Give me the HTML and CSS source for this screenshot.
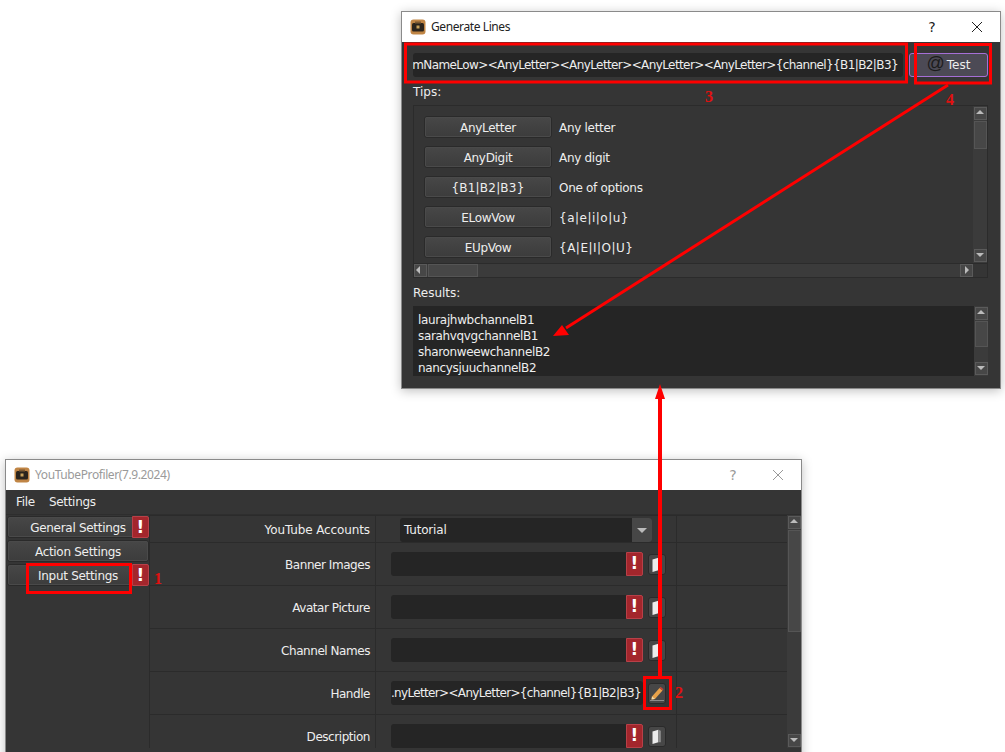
FILE: index.html
```html
<!DOCTYPE html>
<html>
<head>
    <meta charset="utf-8">
    <title>Generate Lines</title>
    <link rel="stylesheet" href="styles.css">
</head>
<body>
    <svg width="0" height="0" class="defs">
        <symbol id="logo" viewBox="0 0 16 16">
            <rect x="0.5" y="0.5" width="15" height="15" rx="3" fill="#c08545"/>
            <rect x="2" y="4" width="12" height="8.500" rx="1.500" fill="#2b241c"/>
            <rect x="5" y="2.500" width="6" height="2" fill="#7d5a32"/>
            <rect x="6.500" y="6.500" width="3" height="3" fill="#c9a15a"/>
        </symbol>
        <symbol id="book" viewBox="0 0 18 20">
            <path d="M3 4l7-2v15l-7 2z" fill="#ececec"/>
            <path d="M10 2l3 1v14l-3 0z" fill="#8c8c8c"/>
        </symbol>
    </svg>

    <div class="window lines-window">
        <div class="titlebar">
            <svg class="logo"><use href="#logo"/></svg>
            <span class="title">Generate Lines</span>
            <span class="help">?</span>
            <svg class="close" viewBox="0 0 12 12"><path d="M1 1l10 10M11 1L1 11" stroke="#222" fill="none"/></svg>
        </div>
        <div class="lines-body">
            <div class="pattern-row">
                <div class="line-edit pattern">mNameLow&gt;&lt;AnyLetter&gt;&lt;AnyLetter&gt;&lt;AnyLetter&gt;&lt;AnyLetter&gt;{channel}{B1|B2|B3}</div>
                <button class="test-btn"><span class="at">@</span> Test</button>
            </div>
            <div class="caption tips-caption">Tips:</div>
            <div class="tips-box">
                <div class="tips-main">
                    <div class="tips-list">
                        <div class="tip"><button class="btn tip-btn">AnyLetter</button><span>Any letter</span></div>
                        <div class="tip"><button class="btn tip-btn">AnyDigit</button><span>Any digit</span></div>
                        <div class="tip"><button class="btn tip-btn opts-btn">{B1|B2|B3}</button><span>One of options</span></div>
                        <div class="tip"><button class="btn tip-btn">ELowVow</button><span class="opts">{a|e|i|o|u}</span></div>
                        <div class="tip"><button class="btn tip-btn">EUpVow</button><span class="opts">{A|E|I|O|U}</span></div>
                    </div>
                    <div class="vscroll">
                        <div class="sb-btn up"></div>
                        <div class="sb-thumb tips-thumb"></div>
                        <div class="sb-track"></div>
                        <div class="sb-btn down"></div>
                    </div>
                </div>
                <div class="hscroll">
                    <div class="sb-btn left"></div>
                    <div class="sb-thumb h-thumb"></div>
                    <div class="sb-track"></div>
                    <div class="sb-btn right"></div>
                    <div class="sb-corner"></div>
                </div>
            </div>
            <div class="caption results-caption">Results:</div>
            <div class="results">
                <div class="results-text">
                    <div>laurajhwbchannelB1</div>
                    <div>sarahvqvgchannelB1</div>
                    <div>sharonweewchannelB2</div>
                    <div>nancysjuuchannelB2</div>
                </div>
                <div class="vscroll">
                    <div class="sb-btn up"></div>
                    <div class="sb-thumb results-thumb"></div>
                    <div class="sb-track"></div>
                    <div class="sb-btn down"></div>
                </div>
            </div>
        </div>
    </div>

    <div class="window profiler-window">
        <div class="titlebar">
            <svg class="logo"><use href="#logo"/></svg>
            <span class="title faded">YouTubeProfiler(7.9.2024)</span>
            <span class="help faded">?</span>
            <svg class="close" viewBox="0 0 12 12"><path d="M1 1l10 10M11 1L1 11" stroke="#999" fill="none"/></svg>
        </div>
        <div class="menubar"><span>File</span><span>Settings</span></div>
        <div class="profiler-body">
            <div class="side">
                <div class="side-item"><button class="btn side-btn">General Settings</button><span class="alert side-alert">!</span></div>
                <div class="side-item"><button class="btn side-btn">Action Settings</button></div>
                <div class="side-item"><button class="btn side-btn">Input Settings</button><span class="alert side-alert">!</span></div>
            </div>
            <div class="form">
                <div class="form-row first">
                    <div class="form-label">YouTube Accounts</div>
                    <div class="form-field">
                        <div class="combo"><span class="combo-text">Tutorial</span><span class="combo-arrow"></span></div>
                    </div>
                    <div class="form-rest"></div>
                </div>
                <div class="form-row">
                    <div class="form-label">Banner Images</div>
                    <div class="form-field">
                        <div class="line-edit field-edit"><span class="alert">!</span></div>
                        <button class="icon-btn"><svg class="book"><use href="#book"/></svg></button>
                    </div>
                    <div class="form-rest"></div>
                </div>
                <div class="form-row">
                    <div class="form-label">Avatar Picture</div>
                    <div class="form-field">
                        <div class="line-edit field-edit"><span class="alert">!</span></div>
                        <button class="icon-btn"><svg class="book"><use href="#book"/></svg></button>
                    </div>
                    <div class="form-rest"></div>
                </div>
                <div class="form-row">
                    <div class="form-label">Channel Names</div>
                    <div class="form-field">
                        <div class="line-edit field-edit"><span class="alert">!</span></div>
                        <button class="icon-btn"><svg class="book"><use href="#book"/></svg></button>
                    </div>
                    <div class="form-rest"></div>
                </div>
                <div class="form-row">
                    <div class="form-label">Handle</div>
                    <div class="form-field">
                        <div class="line-edit field-edit handle">.nyLetter&gt;&lt;AnyLetter&gt;{channel}{B1|B2|B3}</div>
                        <button class="icon-btn">
                            <svg class="pencil" viewBox="0 0 16 16">
                                <path d="M3 11.500L10.500 3l3 2.500L6 14l-3.500 .5z" fill="#e8a24a"/>
                                <path d="M10.500 3l1-1.200 3 2.500-1 1.200z" fill="#c8443a"/>
                                <path d="M2.500 14.500l.5-3 3 2.500z" fill="#f3dcae"/>
                                <path d="M1 15.500h14" stroke="#8a8a8a"/>
                            </svg>
                        </button>
                    </div>
                    <div class="form-rest"></div>
                </div>
                <div class="form-row">
                    <div class="form-label">Description</div>
                    <div class="form-field">
                        <div class="line-edit field-edit"><span class="alert">!</span></div>
                        <button class="icon-btn"><svg class="book"><use href="#book"/></svg></button>
                    </div>
                    <div class="form-rest"></div>
                </div>
            </div>
            <div class="vscroll main-scroll">
                <div class="sb-btn up"></div>
                <div class="sb-thumb main-thumb"></div>
                <div class="sb-track"></div>
                <div class="sb-btn down"></div>
            </div>
        </div>
    </div>

    <!-- red tutorial marks drawn over the screenshot -->
    <svg class="marks" width="1005" height="752" viewBox="0 0 1005 752">
        <g fill="none" stroke="#f00" stroke-width="3">
            <rect x="405.500" y="44" width="501" height="38"/>
            <rect x="915.500" y="44.500" width="75" height="38.500"/>
            <rect x="27.500" y="564.500" width="103" height="28"/>
            <rect x="644.500" y="677.500" width="26" height="31"/>
            <path d="M948 85L566 328"/>
        </g>
        <path d="M660 398V678" fill="none" stroke="#f00" stroke-width="4"/>
        <path d="M553 336L562 325L569 335z" fill="#f00"/>
        <path d="M660 384L655 399H665z" fill="#f00"/>
        <g class="mark-num">
            <text x="154" y="584">1</text>
            <text x="675" y="698">2</text>
            <text x="705" y="102">3</text>
            <text x="946" y="105">4</text>
        </g>
    </svg>
</body>
</html>
```

FILE: styles.css
```css
html, body {
    margin: 0;
    padding: 0;
}

body {
    width: 1005px;
    height: 752px;
    overflow: hidden;
    background: #fff;
    position: relative;
    font-family: "DejaVu Sans", sans-serif;
    font-size: 12px;
    color: #eee;
}

.defs {
    position: absolute;
}

button {
    font: inherit;
    color: inherit;
    padding: 0;
}

.window {
    position: absolute;
    box-sizing: border-box;
    border: 1px solid #8a8a8a;
    background: #353535;
    box-shadow: 0 2px 10px rgba(0, 0, 0, .25);
    display: flex;
    flex-direction: column;
}

.lines-window {
    left: 401px;
    top: 11px;
    width: 600px;
    height: 378px;
}

.profiler-window {
    left: 5px;
    top: 459px;
    width: 797px;
    height: 310px;
}

.titlebar {
    height: 30px;
    flex: none;
    background: #fff;
    color: #222;
    display: flex;
    align-items: center;
}

.logo {
    width: 16px;
    height: 16px;
    margin-left: 8px;
    margin-right: 5px;
}

.title {
    flex: 1;
    font-family: "Noto Sans", sans-serif;
    letter-spacing: -.4px;
    margin-bottom: 1px;
}

.faded {
    color: #9a9a9a;
}

.help {
    width: 14px;
    text-align: center;
    margin-right: 32px;
    font-size: 14px;
}

.close {
    width: 12px;
    height: 12px;
    margin-right: 17px;
}

/* generate lines */
.lines-body {
    flex: 1;
    padding: 11px 12px 0 11px;
    display: flex;
    flex-direction: column;
}

.pattern-row {
    display: flex;
    gap: 6px;
    height: 24px;
}

.line-edit {
    background: #252525;
    border-radius: 3px;
    box-sizing: border-box;
}

.pattern {
    width: 490px;
    overflow: hidden;
    display: flex;
    justify-content: flex-end;
    align-items: center;
    white-space: nowrap;
    padding-right: 5px;
    letter-spacing: -.6px;
}

.test-btn {
    width: 79px;
    background: #4c4a55;
    border: 1px solid #a56fd6;
    border-radius: 3px;
    display: flex;
    align-items: center;
    justify-content: center;
    gap: 2px;
}

.at {
    font-family: "Liberation Sans", sans-serif;
    font-size: 18px;
    color: #1c1c1c;
    margin-bottom: 3px;
}

.caption {
    line-height: 14px;
}

.tips-caption {
    margin-top: 8px;
    height: 20px;
}

.results-caption {
    margin-top: 8px;
    height: 20px;
}

.tips-box {
    height: 173px;
    box-sizing: border-box;
    border: 1px solid #2b2b2b;
    display: flex;
    flex-direction: column;
}

.tips-main {
    flex: 1;
    display: flex;
    min-height: 0;
}

.tips-list {
    flex: 1;
    padding: 10px 0 0 10px;
    display: flex;
    flex-direction: column;
    gap: 8px;
}

.tip {
    display: flex;
    align-items: center;
    gap: 7px;
    height: 22px;
    letter-spacing: -.3px;
}

.tip span {
    padding-top: 2px;
}

.tip .opts {
    letter-spacing: .5px;
}

.btn {
    background: linear-gradient(#474747, #3c3c3c);
    border: 1px solid #2a2a2a;
    border-radius: 3px;
    outline: 1px solid #4a4a4a;
    outline-offset: -2px;
    letter-spacing: -.3px;
    padding-top: 2px;
}

.tip-btn {
    width: 128px;
    height: 22px;
}

.opts-btn {
    letter-spacing: .2px;
}

.results {
    height: 70px;
    background: #252525;
    display: flex;
}

.results-text {
    flex: 1;
    padding: 6px 5px 0;
    line-height: 16px;
    letter-spacing: -.34px;
}

/* scrollbars */
.vscroll {
    width: 14px;
    flex: none;
    box-sizing: border-box;
    padding: 1px 0;
    background: #3b3b3b;
    display: flex;
    flex-direction: column;
    align-items: center;
}

.hscroll {
    height: 14px;
    flex: none;
    box-sizing: border-box;
    background: #3b3b3b;
    border-top: 1px solid #2b2b2b;
    display: flex;
}

.sb-track {
    flex: 1;
}

.sb-btn {
    width: 13px;
    height: 13px;
    flex: none;
    background: #474747;
    border: 1px solid #5a5a5a;
    box-sizing: border-box;
    position: relative;
}

.sb-btn::after {
    content: "";
    position: absolute;
    left: 1px;
    top: 2px;
    border: 4.500px solid transparent;
}

.up::after {
    left: 1px;
    top: -2px;
    border-bottom-color: #bbb;
}

.down::after {
    left: 1px;
    top: 3px;
    border-top-color: #bbb;
}

.left::after {
    left: -3px;
    top: 1px;
    border-right-color: #bbb;
}

.right::after {
    left: 4px;
    top: 1px;
    border-left-color: #bbb;
}

.sb-thumb {
    background: #474747;
    border: 1px solid #555;
    box-sizing: border-box;
}

.tips-thumb {
    width: 13px;
    height: 28px;
    margin-top: 1px;
}

.results-thumb {
    width: 13px;
    height: 26px;
    margin-top: 1px;
}

.main-thumb {
    width: 13px;
    height: 102px;
    margin-top: 1px;
}

.h-thumb {
    width: 50px;
    height: 13px;
    margin-left: 1px;
}

.sb-corner {
    width: 14px;
    background: #353535;
}

/* profiler */
.menubar {
    height: 25px;
    flex: none;
    background: #353535;
    display: flex;
    gap: 14px;
    padding-left: 10px;
    align-items: center;
    border-bottom: 1px solid #2e2e2e;
    box-sizing: border-box;
    letter-spacing: -.3px;
}

.profiler-body {
    flex: none;
    height: 233px;
    display: flex;
}

.side {
    width: 143px;
    flex: none;
    padding: 1px 0 0 1px;
    box-sizing: border-box;
    display: flex;
    flex-direction: column;
    gap: 2px;
}

.side-item {
    display: flex;
    height: 22px;
    position: relative;
}

.side-btn {
    flex: 1;
}

.alert {
    width: 17px;
    background: #a3262c;
    border: 1px solid #b84048;
    border-radius: 0 2px 2px 0;
    box-sizing: border-box;
    color: #fff;
    font-weight: bold;
    font-size: 17px;
    line-height: 20px;
    text-align: center;
}

.side-alert {
    position: absolute;
    right: 0;
    top: 0;
    height: 22px;
}

.form {
    flex: 1;
    overflow: hidden;
    border-left: 1px solid #2b2b2b;
}

.form-row {
    display: flex;
    height: 43px;
    box-sizing: border-box;
    border-bottom: 1px solid #2b2b2b;
}

.form-row.first {
    height: 28px;
    border-top: 1px solid #2b2b2b;
}

.form-label {
    width: 220px;
    padding: 2px 5px 0 0;
    flex: none;
    display: flex;
    align-items: center;
    justify-content: flex-end;
    letter-spacing: -.45px;
    border-right: 1px solid #2b2b2b;
}

.first .form-label {
    padding-top: 1px;
    letter-spacing: -.12px;
}

.form-field {
    width: 285px;
    flex: none;
    display: flex;
    align-items: center;
    gap: 5px;
    padding-left: 15px;
    border-right: 1px solid #2b2b2b;
}

.first .form-field {
    padding-top: 1px;
}

.form-rest {
    flex: 1;
}

.combo {
    width: 252px;
    height: 24px;
    margin-left: 9px;
    background: #252525;
    border-radius: 3px;
    display: flex;
    align-items: center;
    justify-content: space-between;
}

.combo-text {
    padding-left: 4px;
    letter-spacing: -.2px;
}

.combo-arrow {
    width: 20px;
    height: 24px;
    background: #474747;
    border-radius: 0 3px 3px 0;
    position: relative;
}

.combo-arrow::after {
    content: "";
    position: absolute;
    left: 5px;
    top: 10px;
    border: 5px solid transparent;
    border-top-color: #bbb;
}

.field-edit {
    width: 252px;
    height: 24px;
    display: flex;
    justify-content: flex-end;
}

.handle {
    align-items: center;
    white-space: nowrap;
    padding-right: 2px;
    letter-spacing: -.66px;
}

.icon-btn {
    width: 18px;
    height: 21px;
    background: #474747;
    border: 1px solid #2a2a2a;
    border-radius: 3px;
    display: flex;
    align-items: center;
    justify-content: center;
}

.book {
    width: 15px;
    height: 17px;
}

.pencil {
    width: 16px;
    height: 16px;
}

/* tutorial marks */
.marks {
    position: absolute;
    left: 0;
    top: 0;
}

.mark-num {
    fill: #e01010;
    font-family: "Liberation Serif", serif;
    font-size: 16px;
    font-weight: bold;
}
```
